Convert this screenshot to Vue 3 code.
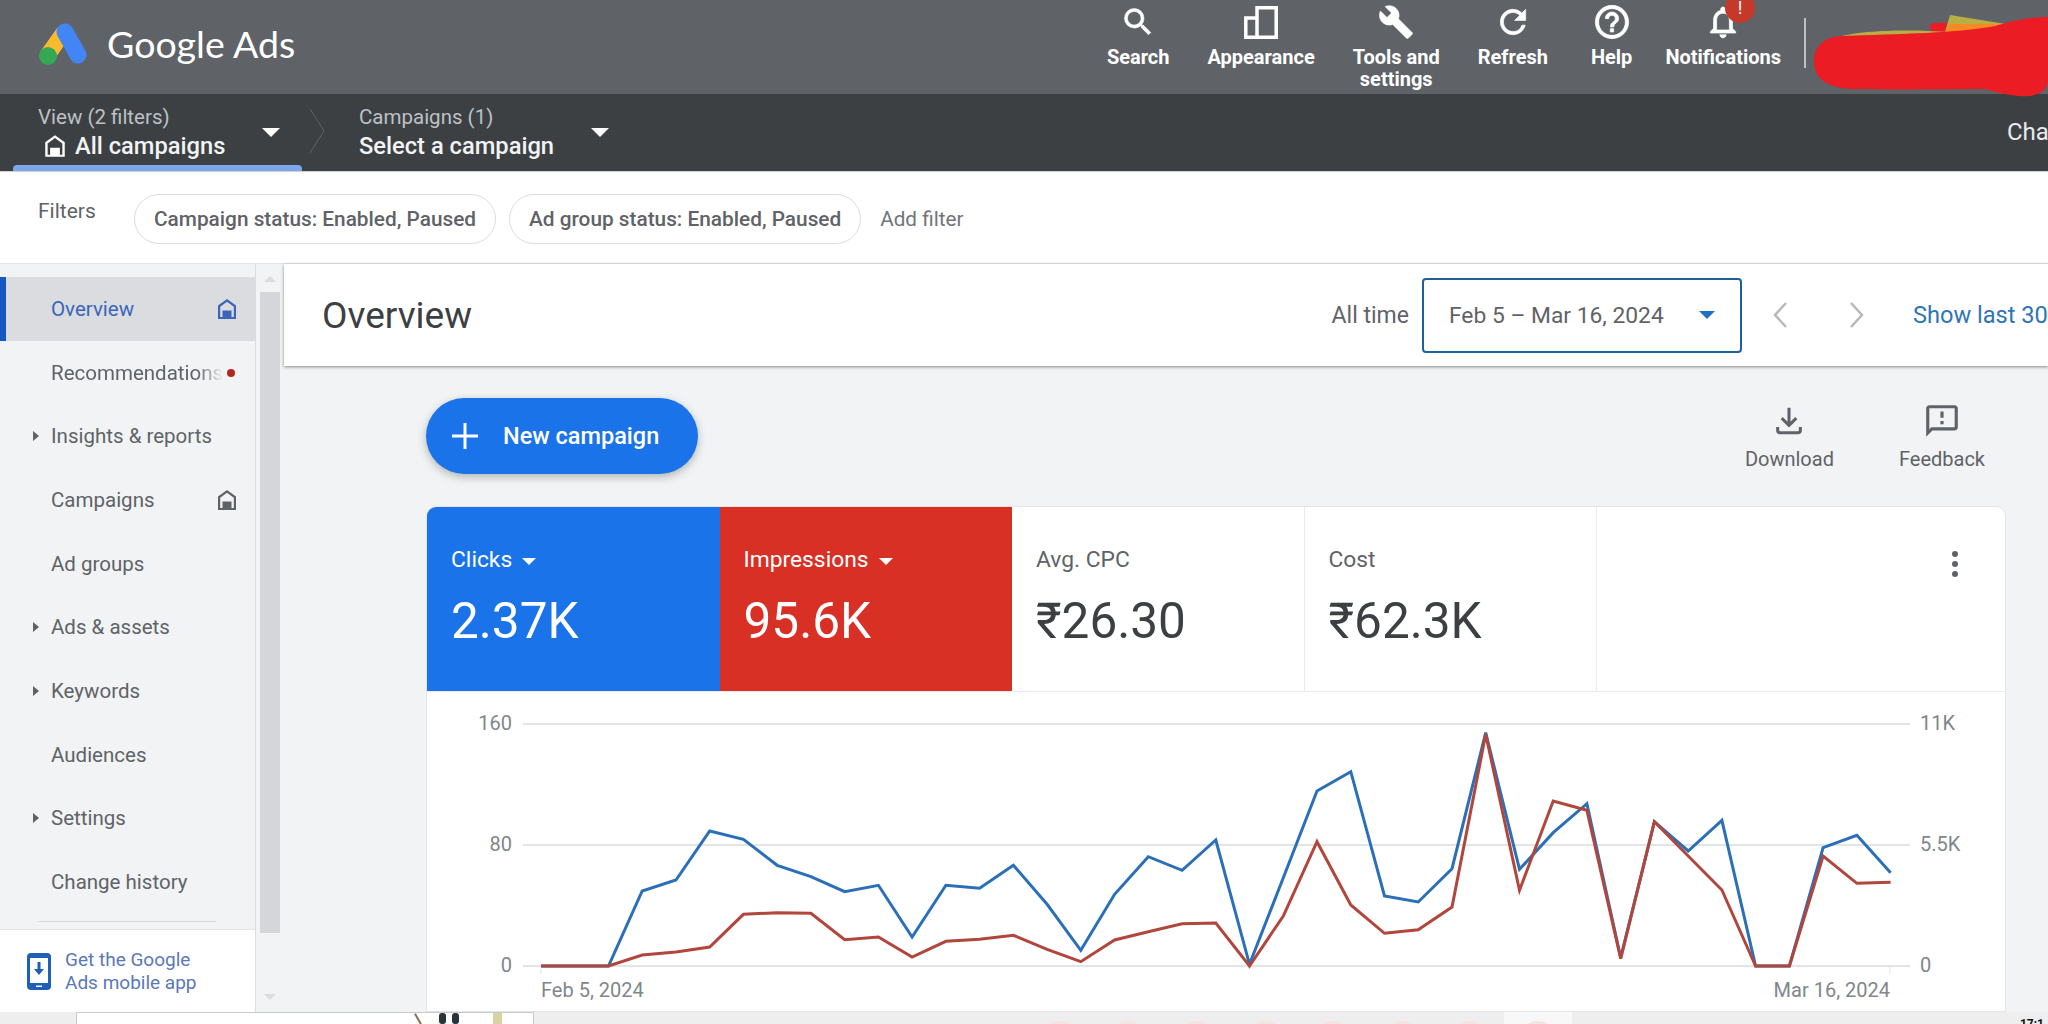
<template>
  <div class="app">
    <!-- top bar -->
    <header class="topbar">
      <div class="brand">
        <svg class="logo" viewBox="0 0 60 44" width="60" height="44">
          <line x1="25" y1="10" x2="8" y2="34" stroke="#f9bb2d" stroke-width="16" />
          <circle cx="9" cy="34" r="9" fill="#34a853" />
          <line x1="26" y1="10" x2="39" y2="33" stroke="#4285f4" stroke-width="17" stroke-linecap="round" />
        </svg>
        <span class="brand-name">Google Ads</span>
      </div>
      <nav class="top-nav">
        <div v-for="item in topNav" :key="item.label" class="top-item">
          <div class="top-icon">
            <svg v-if="item.path" :viewBox="item.view" :width="item.size" :height="item.size" fill="#fff" stroke="#fff" stroke-width="0.400">
              <path :d="item.path" />
            </svg>
            <svg v-else viewBox="0 0 34 33" width="34" height="33" fill="none" stroke="#fff" stroke-width="3.500">
              <path d="M13 1.800h19.200v29.400H1.800V12H13zM13 12v19.200" />
            </svg>
            <span v-if="item.badge" class="badge">!</span>
          </div>
          <span class="top-label">{{ item.label }}</span>
        </div>
      </nav>
      <div class="top-divider"></div>
      <div class="account"></div>
      <!-- the hand-drawn cover over the account name -->
      <svg class="scribble" viewBox="0 0 268 110" width="268" height="110">
        <rect x="150" y="23" width="40" height="9" rx="4.500" fill="#ec1c24" />
        <path d="M170 15 232 25 165 32z" fill="#b9ad45" />
        <path d="M58 37C80 30 130 29 170 32L150 38z" fill="#b9ad45" />
        <path d="M165 32 171 24 230 24C210 28 190 31 165 32z" fill="#f58a24" />
        <path d="M60 36C40 38 34 50 34 62C34 80 50 89 75 89C120 90 170 89 205 89C225 95 240 97 250 96C262 94 268 88 268 80L268 17C250 17 235 20 215 26C180 33 120 34 60 36z" fill="#ec1c24" />
      </svg>
    </header>

    <!-- view picker -->
    <div class="subbar">
      <div class="picker picker-active">
        <div class="picker-text">
          <span class="picker-small">View (2 filters)</span>
          <span class="picker-main">
            <svg class="picker-home" viewBox="0 0 24 24" width="26" height="26" fill="#fff"><path :d="homePath" fill-rule="evenodd" /></svg>
            All campaigns
          </span>
        </div>
        <span class="caret"></span>
      </div>
      <svg class="crumb" viewBox="0 0 16 46" width="16" height="46" fill="none" stroke="#5f6368" stroke-width="1"><path d="M1 1l14 22L1 45" /></svg>
      <div class="picker picker-second">
        <div class="picker-text">
          <span class="picker-small">Campaigns (1)</span>
          <span class="picker-main">Select a campaign</span>
        </div>
        <span class="caret"></span>
      </div>
      <span class="change">Cha</span>
    </div>

    <!-- filters -->
    <div class="filterbar">
      <span class="filter-title">Filters</span>
      <span class="chip">Campaign status: Enabled, Paused</span>
      <span class="chip">Ad group status: Enabled, Paused</span>
      <span class="add-filter">Add filter</span>
    </div>

    <div class="body">
      <!-- side menu -->
      <aside class="sidebar">
        <div class="side-list">
          <div
            v-for="item in sideItems"
            :key="item.label"
            :class="['side-item', { active: item.active }]"
          >
            <span v-if="item.arrow" class="side-arrow"></span>
            <span :class="['side-label', { faded: item.dot }]">{{ item.label }}</span>
            <svg v-if="item.home" class="side-home" viewBox="0 0 24 24" width="24" height="24" fill="currentColor"><path :d="homePath" fill-rule="evenodd" /></svg>
            <span v-if="item.dot" class="side-dot"></span>
          </div>
          <div class="side-rule"></div>
        </div>
        <div class="side-foot">
          <svg viewBox="0 0 24 37" width="24" height="37">
            <rect width="24" height="37" rx="4" fill="#1f5fb4" />
            <rect x="3" y="5" width="18" height="25" fill="#fff" />
            <path d="M10.500 9h3v7h3.500L12 22l-5-6h3.500z" fill="#1f5fb4" />
            <rect x="9" y="32.500" width="6" height="1.500" fill="#fff" />
          </svg>
          <span class="foot-text">Get the Google<br />Ads mobile app</span>
        </div>
      </aside>
      <div class="scrollbar">
        <span class="scroll-up"></span>
        <div class="scroll-thumb"></div>
        <span class="scroll-down"></span>
      </div>

      <main class="main">
        <div class="page-head">
          <h1 class="page-title">Overview</h1>
          <span class="all-time">All time</span>
          <div class="date-box">
            <span>Feb 5 – Mar 16, 2024</span>
            <span class="date-caret"></span>
          </div>
          <svg class="chev" viewBox="0 0 18 30" width="18" height="30" fill="none" stroke="#b5b8bc" stroke-width="2.500"><path d="M15 3 4 15l11 12" /></svg>
          <svg class="chev chev-next" viewBox="0 0 18 30" width="18" height="30" fill="none" stroke="#b5b8bc" stroke-width="2.500"><path d="M3 3l11 12L3 27" /></svg>
          <span class="show-last">Show last 30</span>
        </div>

        <div class="content">
          <div class="actions">
            <button class="new-btn">
              <svg viewBox="0 0 26 26" width="26" height="26" stroke="#fff" stroke-width="3"><path d="M13 0v26M0 13h26" /></svg>
              New campaign
            </button>
            <div class="tool tool-download">
              <svg viewBox="0 0 24 24" width="32" height="32" fill="none" stroke="#5f6368" stroke-width="2.300"><path d="M12 2v13M6.500 9.800 12 15.300l5.500-5.500M3.500 16.500v2.500a1.800 1.800 0 0 0 1.800 1.800h13.400a1.800 1.800 0 0 0 1.800-1.800v-2.500" /></svg>
              <span>Download</span>
            </div>
            <div class="tool tool-feedback">
              <svg viewBox="0 0 24 24" width="38" height="38" fill="#5f6368"><path d="M20 2H4c-1.100 0-2 .9-2 2v18l4-4h14c1.100 0 2-.9 2-2V4c0-1.100-.9-2-2-2zm0 14H5.170L4 17.170V4h16v12zM11 12h2v2h-2zm0-6h2v4h-2z" /></svg>
              <span>Feedback</span>
            </div>
          </div>

          <section class="card">
            <div class="tabs">
              <div
                v-for="tab in tabs"
                :key="tab.label"
                :class="['tab', tab.cls]"
              >
                <div class="tab-label">
                  {{ tab.label }}
                  <span v-if="tab.caret" class="tab-caret"></span>
                </div>
                <div class="tab-value">{{ tab.value }}</div>
              </div>
              <div class="dots"><i></i><i></i><i></i></div>
            </div>
            <svg class="chart" viewBox="0 0 1579 321" width="1579" height="321">
              <g v-for="tick in ticks" :key="tick.left">
                <line x1="96" :y1="tick.y" x2="1483" :y2="tick.y" stroke="#e3e4e6" stroke-width="2" />
                <text x="85" :y="tick.y + 6" text-anchor="end" class="axis">{{ tick.left }}</text>
                <text x="1493" :y="tick.y + 6" class="axis">{{ tick.right }}</text>
              </g>
              <line x1="114" y1="274" x2="114" y2="282" stroke="#e3e4e6" />
              <line x1="1463" y1="274" x2="1463" y2="282" stroke="#e3e4e6" />
              <text x="114" y="305" class="axis">Feb 5, 2024</text>
              <text x="1463" y="305" text-anchor="end" class="axis">Mar 16, 2024</text>
              <polyline :points="bluePoints" fill="none" stroke="#2b6fb8" stroke-width="3" />
              <polyline :points="redPoints" fill="none" stroke="#b0463c" stroke-width="3" />
            </svg>
          </section>
        </div>
      </main>
    </div>

    <!-- browser window behind, only a sliver shows -->
    <footer class="strip">
      <div class="strip-panel">
        <span class="strip-art"><b></b><i></i><i></i><u></u></span>
      </div>
      <div class="strip-icons">
        <span v-for="n in 8" :key="n" :class="['strip-icon', { open: n === 8 }]"><i></i></span>
      </div>
      <span class="strip-clock">17:1</span>
    </footer>
  </div>
</template>

<script setup>
const homePath =
  "M12 2 3 8.500V22h18V8.500L12 2zm0 2.700 6.800 5V20h-2.300v-6.500h-9V20H5.200V9.700L12 4.700z";

const topNav = [
  {
    label: "Search",
    view: "0 0 24 24",
    size: 36,
    path: "M15.500 14h-.79l-.28-.27A6.471 6.471 0 0 0 16 9.500 6.500 6.500 0 1 0 9.500 16c1.610 0 3.090-.59 4.230-1.570l.27.28v.79l5 4.990L20.490 19l-4.990-5zm-6 0C7.010 14 5 11.990 5 9.500S7.010 5 9.500 5 14 7.010 14 9.500 11.990 14 9.500 14z",
  },
  { label: "Appearance" },
  {
    label: "Tools and\nsettings",
    view: "0 0 24 24",
    size: 36,
    path: "M22.700 19l-9.100-9.100c.9-2.300.4-5-1.500-6.900-2-2-5-2.400-7.400-1.300L9 6 6 9 1.600 4.700C.4 7.100.9 10.100 2.900 12.100c1.900 1.900 4.600 2.400 6.900 1.500l9.100 9.100c.4.4 1 .4 1.400 0l2.300-2.300c.5-.4.5-1.100.1-1.400z",
  },
  {
    label: "Refresh",
    view: "0 0 24 24",
    size: 38,
    path: "M17.650 6.350A7.958 7.958 0 0 0 12 4c-4.420 0-7.990 3.580-7.990 8s3.570 8 7.990 8c3.730 0 6.840-2.550 7.730-6h-2.080A5.990 5.990 0 0 1 12 18c-3.310 0-6-2.690-6-6s2.690-6 6-6c1.660 0 3.140.69 4.220 1.780L13 11h7V4l-2.350 2.350z",
  },
  {
    label: "Help",
    view: "0 0 24 24",
    size: 40,
    path: "M11 18h2v-2h-2v2zm1-16C6.480 2 2 6.480 2 12s4.480 10 10 10 10-4.480 10-10S17.520 2 12 2zm0 18c-4.410 0-8-3.590-8-8s3.590-8 8-8 8 3.590 8 8-3.590 8-8 8zm0-14c-2.210 0-4 1.790-4 4h2c0-1.100.9-2 2-2s2 .9 2 2c0 2-3 1.750-3 5h2c0-2.250 3-2.500 3-5 0-2.210-1.790-4-4-4z",
  },
  {
    label: "Notifications",
    view: "0 0 24 24",
    size: 38,
    badge: true,
    path: "M12 22c1.100 0 2-.9 2-2h-4c0 1.100.9 2 2 2zm6-6v-5c0-3.070-1.630-5.640-4.500-6.320V4c0-.83-.67-1.500-1.500-1.500s-1.500.67-1.500 1.500v.68C7.640 5.360 6 7.920 6 11v5l-2 2v1h16v-1l-2-2zm-2 1H8v-6c0-2.480 1.510-4.500 4-4.500s4 2.020 4 4.500v6z",
  },
];

const sideItems = [
  { label: "Overview", active: true, home: true },
  { label: "Recommendations", dot: true },
  { label: "Insights & reports", arrow: true },
  { label: "Campaigns", home: true },
  { label: "Ad groups" },
  { label: "Ads & assets", arrow: true },
  { label: "Keywords", arrow: true },
  { label: "Audiences" },
  { label: "Settings", arrow: true },
  { label: "Change history" },
];

const tabs = [
  { label: "Clicks", value: "2.37K", cls: "tab-blue", caret: true },
  { label: "Impressions", value: "95.6K", cls: "tab-red", caret: true },
  { label: "Avg. CPC", value: "₹26.30" },
  { label: "Cost", value: "₹62.3K" },
];

const ticks = [
  { y: 32, left: "160", right: "11K" },
  { y: 153, left: "80", right: "5.5K" },
  { y: 274, left: "0", right: "0" },
];

// measured off the reference, one value per day (Feb 5 - Mar 16)
const blue = [795, 795, 795, 570, 537, 390, 415, 493, 527, 572, 553, 708, 553, 562, 493, 610, 748, 580, 467, 508, 417, 790, 530, 270, 212, 585, 603, 503, 95, 505, 395, 308, 770, 362, 450, 358, 795, 795, 440, 403, 515];
const red = [795, 795, 795, 762, 753, 738, 640, 635, 637, 716, 708, 768, 721, 715, 703, 745, 782, 717, 692, 668, 666, 795, 645, 422, 612, 697, 686, 618, 100, 568, 300, 328, 773, 362, 465, 567, 795, 795, 465, 547, 544];

const toPoints = (list) =>
  list
    .map((v, i) => `${(114 + i * 33.74).toFixed(1)},${(9 + v / 3).toFixed(1)}`)
    .join(" ");

const bluePoints = toPoints(blue);
const redPoints = toPoints(red);
</script>

<style>
html,
body {
  margin: 0;
  background: #fff;
}
</style>

<style scoped>
.app {
  position: relative;
  width: 2048px;
  height: 1024px;
  overflow: hidden;
  display: flex;
  flex-direction: column;
  font-family: Roboto, "Liberation Sans", sans-serif;
  color: #5f6368;
}

/* top bar */
.topbar {
  position: relative;
  flex: none;
  height: 94px;
  display: flex;
  align-items: flex-start;
  background: #5f6368;
}

.brand {
  display: flex;
  align-items: center;
  padding: 21px 0 0 39px;
}

.logo {
  display: block;
}

.brand-name {
  margin-left: 8px;
  font-family: Lato, "Liberation Sans", sans-serif;
  font-size: 37.500px;
  color: #fff;
}

.top-nav {
  display: flex;
  gap: 38px;
  margin-left: auto;
}

.top-item {
  display: flex;
  flex-direction: column;
  align-items: center;
}

.top-item:nth-child(5) {
  margin: 0 -5px 0 5px;
}

.top-icon {
  position: relative;
  height: 44px;
  display: flex;
  align-items: center;
  justify-content: center;
}

.top-label {
  margin-top: 2px;
  font-size: 20px;
  line-height: 22px;
  font-weight: 700;
  color: #fff;
  text-align: center;
  white-space: pre-line;
}

.badge {
  position: absolute;
  top: -7px;
  left: 50%;
  width: 30px;
  height: 30px;
  margin-left: 2px;
  border-radius: 50%;
  background: #c5392a;
  color: #fff;
  font-size: 18px;
  line-height: 30px;
  text-align: center;
}

.top-divider {
  width: 2px;
  height: 50px;
  margin: 18px 0 0 23px;
  background: #bdc1c6;
}

.account {
  width: 242px;
}

.scribble {
  position: absolute;
  top: 0;
  right: 0;
}

/* view picker */
.subbar {
  flex: none;
  height: 77px;
  display: flex;
  background: #3c4043;
  border-bottom: 1px solid #d0d2d5;
}

.picker {
  position: relative;
  display: flex;
  box-sizing: border-box;
  height: 77px;
}

.picker-active {
  width: 289px;
  margin-left: 13px;
  padding-left: 25px;
}

.picker-active::after {
  content: "";
  position: absolute;
  left: 0;
  right: 0;
  bottom: 0;
  height: 6px;
  border-radius: 4px 4px 0 0;
  background: #7ba7ea;
}

.picker-second {
  width: 300px;
  margin-left: 34px;
}

.picker-text {
  display: flex;
  flex-direction: column;
  padding-top: 11px;
}

.picker-small {
  font-size: 20.500px;
  line-height: 24px;
  color: #bdc1c6;
}

.picker-main {
  display: flex;
  align-items: center;
  gap: 7px;
  margin-top: 2px;
  font-size: 23.700px;
  line-height: 30px;
  font-weight: 500;
  color: #f1f3f4;
  white-space: nowrap;
}

.picker-home {
  margin-left: 4px;
}

.caret {
  position: absolute;
  top: 34px;
  left: 249px;
  border-top: 9px solid #fff;
  border-left: 9px solid transparent;
  border-right: 9px solid transparent;
}

.picker-second .caret {
  left: 232px;
}

.crumb {
  flex: none;
  margin: 14px 0 0 7px;
}

.change {
  margin-left: auto;
  padding-top: 23px;
  width: 41px;
  overflow: hidden;
  font-size: 24px;
  line-height: 30px;
  color: #e8eaed;
}

/* filters */
.filterbar {
  flex: none;
  box-sizing: border-box;
  height: 92px;
  display: flex;
  align-items: flex-start;
  padding: 22px 0 0 38px;
  background: #fff;
  border-bottom: 1px solid #e3e4e6;
}

.filter-title {
  width: 96px;
  padding-top: 2px;
  font-size: 21px;
  line-height: 30px;
}

.chip {
  box-sizing: border-box;
  height: 50px;
  margin-right: 13px;
  padding: 0 19px;
  border: 1px solid #dadce0;
  border-radius: 25px;
  font-size: 20.800px;
  line-height: 49px;
  font-weight: 500;
  white-space: nowrap;
}

.add-filter {
  margin-left: 6px;
  font-size: 20.700px;
  line-height: 50px;
  color: #70757a;
}

/* layout below the filter bar */
.body {
  flex: 1;
  min-height: 0;
  display: flex;
}

.sidebar {
  flex: none;
  box-sizing: border-box;
  width: 256px;
  display: flex;
  flex-direction: column;
  background: #f1f3f4;
  border-right: 1px solid #dadce0;
}

.side-list {
  flex: 1;
  padding-top: 13px;
}

.side-item {
  position: relative;
  height: 63.700px;
  display: flex;
  align-items: center;
  padding-left: 51px;
  font-size: 20.500px;
  color: #5f6368;
}

.side-item.active {
  box-shadow: inset 6px 0 0 #1558c0;
  background: #dadce0;
  color: #3b66b8;
}

.side-arrow {
  position: absolute;
  left: 33px;
  border-left: 6px solid #5f6368;
  border-top: 5px solid transparent;
  border-bottom: 5px solid transparent;
}

.side-label {
  white-space: nowrap;
}

.side-label.faded {
  width: 172px;
  overflow: hidden;
  -webkit-mask-image: linear-gradient(to right, #000 85%, transparent);
  mask-image: linear-gradient(to right, #000 85%, transparent);
}

.side-home {
  position: absolute;
  right: 16px;
}

.side-dot {
  position: absolute;
  left: 227px;
  width: 8px;
  height: 8px;
  border-radius: 50%;
  background: #b3261e;
}

.side-rule {
  height: 1px;
  margin: 7px 0 0 38px;
  width: 178px;
  background: #dadce0;
}

.side-foot {
  flex: none;
  height: 83px;
  box-sizing: border-box;
  display: flex;
  align-items: center;
  gap: 14px;
  padding-left: 27px;
  background: #fff;
  border-top: 1px solid #e3e4e6;
}

.foot-text {
  font-size: 19px;
  line-height: 23px;
  color: #5a78b8;
}

.scrollbar {
  flex: none;
  position: relative;
  width: 28px;
  background: #f1f3f4;
}

.scroll-thumb {
  position: absolute;
  top: 28px;
  left: 4px;
  width: 20px;
  height: 641px;
  background: #d4d6da;
}

.scroll-up,
.scroll-down {
  position: absolute;
  left: 8px;
  border-left: 6px solid transparent;
  border-right: 6px solid transparent;
}

.scroll-up {
  top: 12px;
  border-bottom: 6px solid #dadce0;
}

.scroll-down {
  bottom: 12px;
  border-top: 6px solid #dadce0;
}

/* main column */
.main {
  flex: 1;
  min-width: 0;
  display: flex;
  flex-direction: column;
  background: #f1f3f4;
}

.page-head {
  flex: none;
  height: 102px;
  display: flex;
  align-items: center;
  padding-left: 38px;
  background: #fff;
  box-shadow: 0 1px 3px rgba(60, 64, 67, 0.6);
  position: relative;
  white-space: nowrap;
}

.page-title {
  margin: 0;
  font-size: 37px;
  font-weight: 400;
  color: #3c4043;
}

.all-time {
  margin-left: auto;
  font-size: 23px;
}

.date-box {
  box-sizing: border-box;
  width: 320px;
  height: 75px;
  margin: 0 0 0 13px;
  padding: 0 26px 0 25px;
  display: flex;
  align-items: center;
  justify-content: space-between;
  border: 2px solid #1f5f9e;
  border-radius: 4px;
  font-size: 22.800px;
}

.date-caret {
  margin-right: -1px;
  border-top: 8px solid #1f6fc4;
  border-left: 8px solid transparent;
  border-right: 8px solid transparent;
}

.chev {
  flex: none;
  margin-left: 29px;
}

.chev-next {
  margin-left: 59px;
}

.show-last {
  margin-left: 47px;
  width: 135px;
  overflow: hidden;
  font-size: 23.600px;
  color: #2e75b8;
}

.content {
  flex: 1;
  min-height: 0;
  padding: 32px 42px 0 142px;
  display: flex;
  flex-direction: column;
}

.actions {
  flex: none;
  height: 108px;
  display: flex;
  align-items: flex-start;
}

.new-btn {
  box-sizing: border-box;
  width: 272px;
  height: 76px;
  display: flex;
  align-items: center;
  gap: 25px;
  padding: 0 0 0 26px;
  border: none;
  border-radius: 38px;
  background: #1a73e8;
  box-shadow: 0 3px 8px rgba(60, 64, 67, 0.35);
  color: #fff;
  font-family: inherit;
  font-size: 23.500px;
  font-weight: 500;
}

.tool {
  display: flex;
  flex-direction: column;
  align-items: center;
  font-size: 20px;
}

.tool svg {
  display: block;
}

.tool span {
  margin-top: 10px;
}

.tool-download {
  margin-left: auto;
  margin-top: 7px;
}

.tool-feedback {
  margin: 4px 21px 0 65px;
}

.tool-feedback span {
  margin-top: 7px;
}

.card {
  flex: 1;
  min-height: 0;
  box-sizing: border-box;
  background: #fff;
  border: 1px solid #e3e4e6;
  border-radius: 10px 10px 0 0;
  overflow: hidden;
}

.tabs {
  position: relative;
  height: 184px;
  display: flex;
  border-bottom: 1px solid #e8eaed;
}

.tab {
  box-sizing: border-box;
  width: 292.500px;
  padding: 39px 0 0 24px;
  border-right: 1px solid #e8eaed;
  color: #5f6368;
}

.tab-label {
  display: flex;
  align-items: center;
  gap: 10px;
  font-size: 22.800px;
  line-height: 28px;
}

.tab-value {
  margin-top: 17px;
  font-size: 49.500px;
  line-height: 60px;
  color: #3c4043;
}

.tab-blue,
.tab-red {
  border-right: none;
  color: #fff;
}

.tab-blue {
  background: #1a73e8;
}

.tab-red {
  background: #d93025;
}

.tab-blue .tab-value,
.tab-red .tab-value {
  color: #fff;
}

.tab-caret {
  margin-top: 3px;
  border-top: 7px solid #fff;
  border-left: 7px solid transparent;
  border-right: 7px solid transparent;
}

.dots {
  position: absolute;
  top: 44px;
  right: 47px;
  display: flex;
  flex-direction: column;
  gap: 4px;
}

.dots i {
  width: 6px;
  height: 6px;
  border-radius: 50%;
  background: #5f6368;
}

.chart {
  display: block;
}

.axis {
  font-size: 20px;
  fill: #80868b;
}

/* sliver of what lies behind the window */
.strip {
  flex: none;
  height: 12px;
  display: flex;
  background: #eeeeee;
  overflow: hidden;
}

.strip-panel {
  box-sizing: border-box;
  width: 458px;
  margin-left: 76px;
  border: 1px solid #c9c9c9;
  border-bottom: none;
  background: #fff;
  position: relative;
}

.strip-art {
  position: absolute;
  left: 340px;
  top: 0;
  display: flex;
  align-items: flex-start;
  gap: 6px;
}

.strip-art b {
  width: 2px;
  height: 12px;
  margin-right: 14px;
  background: #8a6f4d;
  transform: rotate(-30deg);
}

.strip-art i {
  width: 7px;
  height: 11px;
  border-radius: 3px;
  background: #2c3338;
}

.strip-art u {
  width: 9px;
  height: 11px;
  margin-left: 28px;
  background: #d9d3a4;
}

.strip-icons {
  display: flex;
  margin-left: 492px;
}

.strip-icon {
  width: 68.300px;
  display: flex;
  justify-content: center;
  padding-top: 9px;
}

.strip-icon i {
  width: 20px;
  height: 8px;
  border-radius: 50%;
  background: #f6e2e0;
}

.strip-icon.open {
  background: #f8f8f8;
}

.strip-clock {
  margin-left: auto;
  padding: 5px 4px 0 0;
  font-size: 12px;
  font-weight: 700;
  line-height: 14px;
  color: #111;
}
</style>
